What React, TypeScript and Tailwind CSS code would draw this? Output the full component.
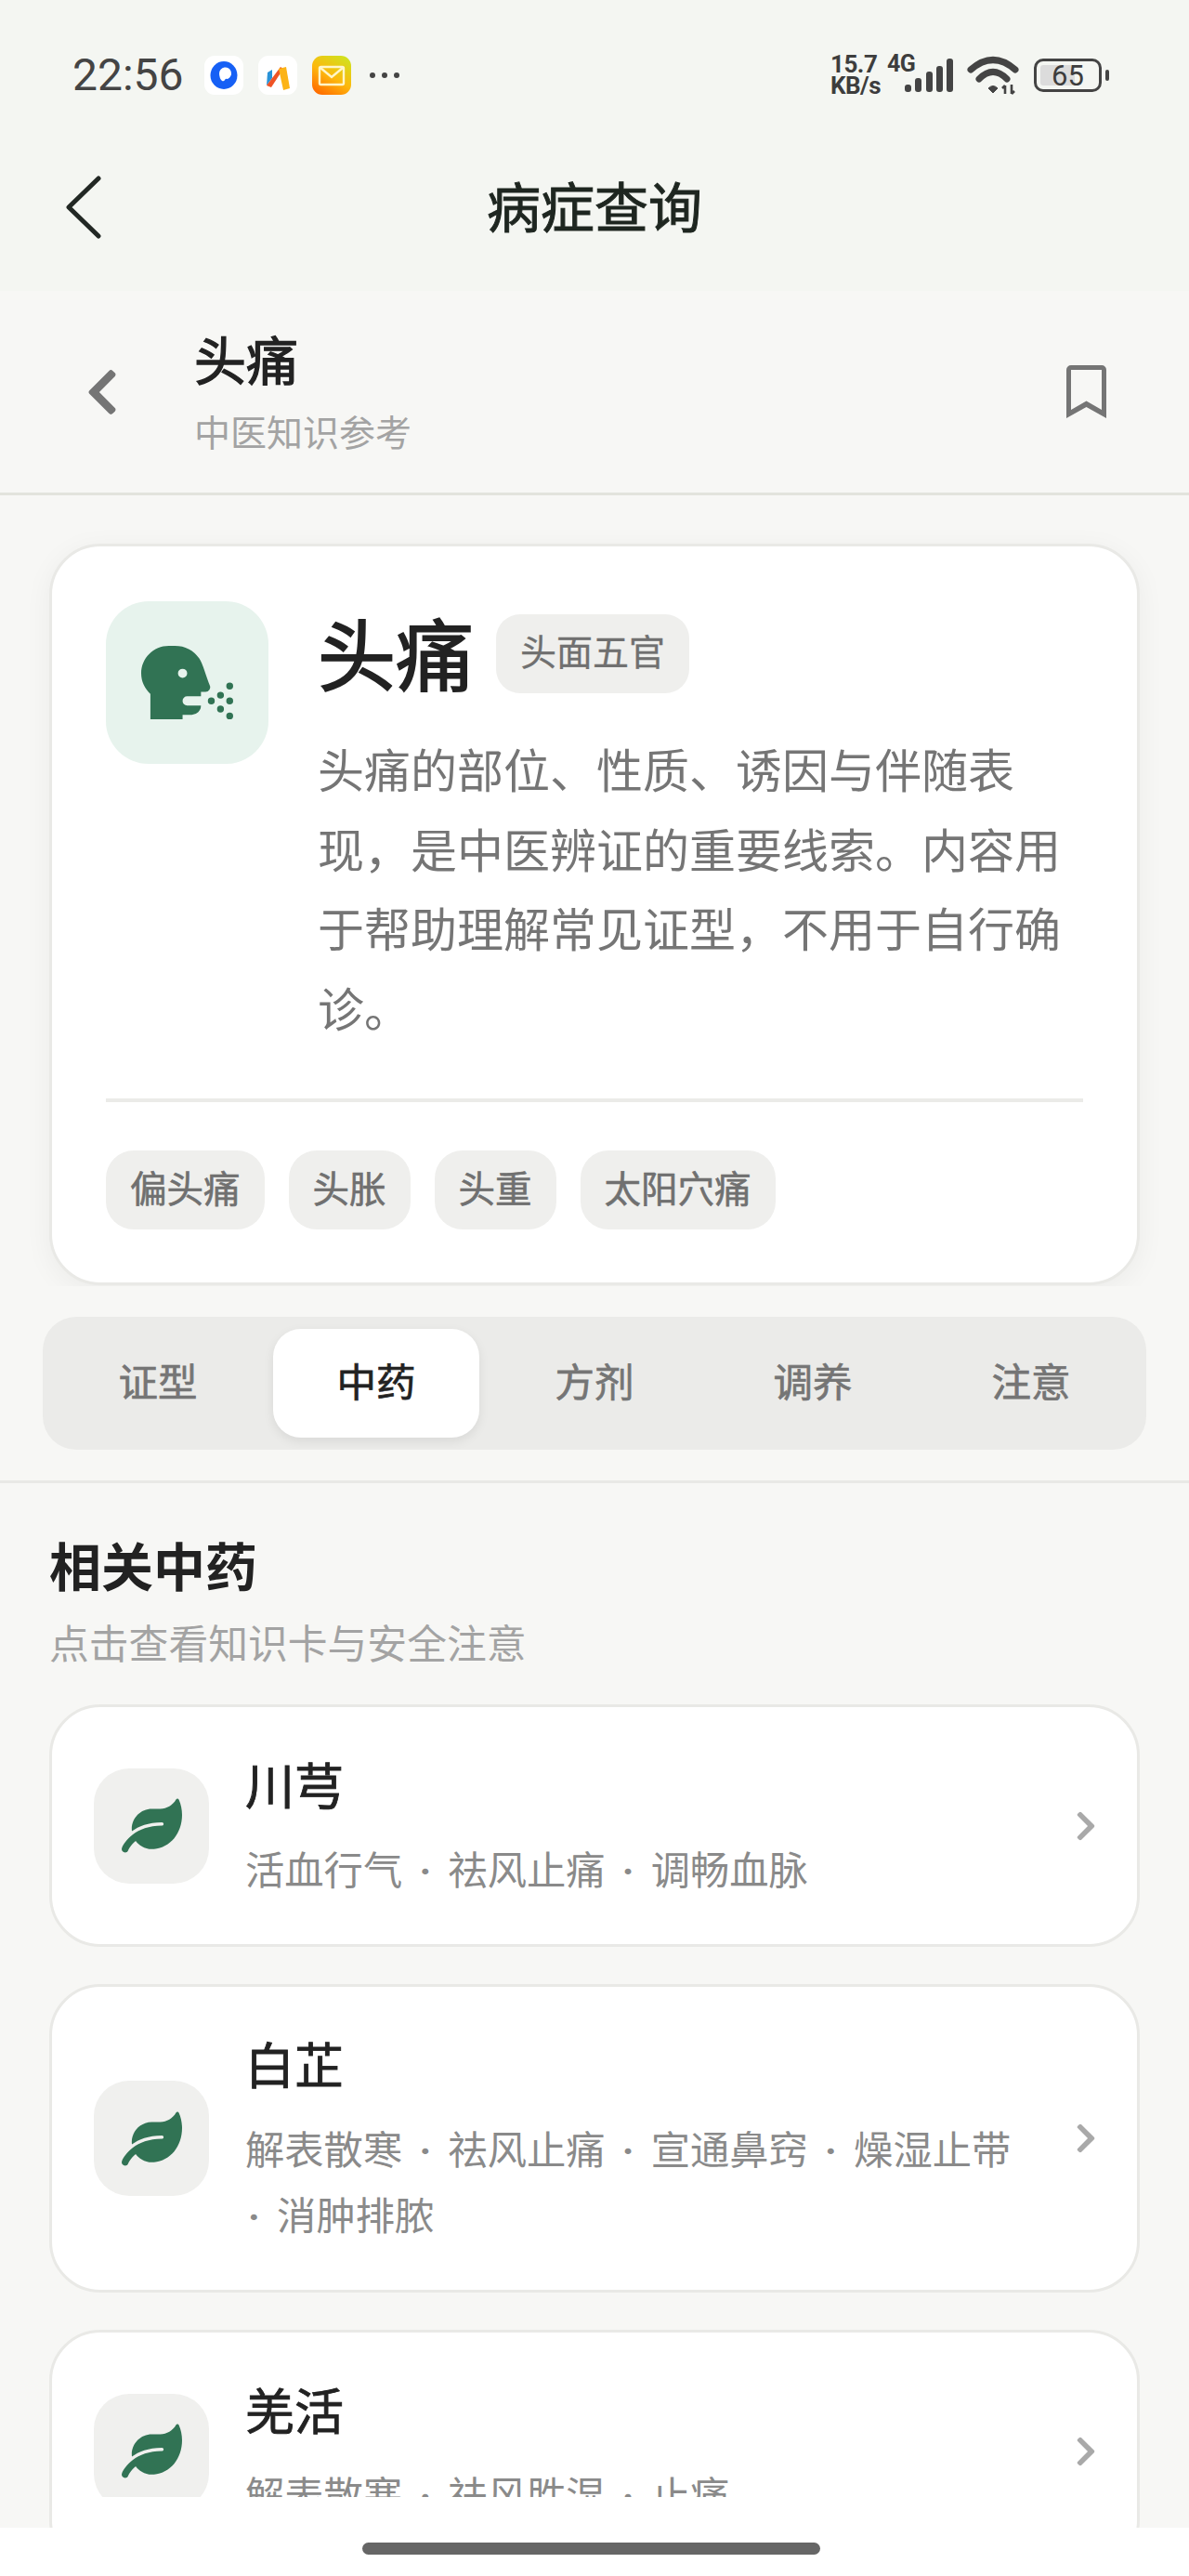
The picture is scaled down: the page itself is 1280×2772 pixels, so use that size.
import React from 'react';
import { FaChevronLeft, FaChevronRight, FaHeadSideCough, FaLeaf } from 'react-icons/fa';

const TAGS = ['偏头痛', '头胀', '头重', '太阳穴痛'];
const TABS = ['证型', '中药', '方剂', '调养', '注意'];

function StatusApps() {
  return (
    <div className="flex items-center gap-[16px] ml-[22px]">
      <svg width="42" height="42" viewBox="0 0 42 42">
        <rect width="42" height="42" rx="11" fill="#fff" />
        <ellipse cx="21" cy="21" rx="14.5" ry="15" fill="#1660f5" />
        <path d="M16 19 a6.5 6.5 0 1 1 9 6 q-2 -1 -3 1 q-1 2 -3 1 q-3 -3 -3 -8z" fill="#fff" />
      </svg>
      <svg width="42" height="42" viewBox="0 0 42 42">
        <rect width="42" height="42" rx="11" fill="#fff" />
        <path d="M9 32 L10 18 L15 15 L15 24 Z" fill="#2a93d8" />
        <path d="M9 32 L24 12 L27 14 L14 34 Z" fill="#ef5325" />
        <path d="M22 14 L30 12 L34 35 L27 37 Z" fill="#fcb316" />
      </svg>
      <svg width="42" height="42" viewBox="0 0 42 42">
        <defs>
          <linearGradient id="mailGrad" x1="0.85" y1="0" x2="0.25" y2="1">
            <stop offset="0" stopColor="#cfe31f" />
            <stop offset="0.55" stopColor="#fdb80d" />
            <stop offset="1" stopColor="#ff6f00" />
          </linearGradient>
        </defs>
        <rect width="42" height="42" rx="11" fill="url(#mailGrad)" />
        <rect x="8" y="12" width="26" height="19" rx="1.5" fill="none" stroke="#fff6c9" strokeWidth="2.4" />
        <path d="M9 13 L21 23 L33 13" fill="none" stroke="#fff6c9" strokeWidth="2.4" />
      </svg>
      <div className="flex gap-[7px] ml-[4px]">
        <span className="w-[6px] h-[6px] rounded-full bg-[#444]" />
        <span className="w-[6px] h-[6px] rounded-full bg-[#444]" />
        <span className="w-[6px] h-[6px] rounded-full bg-[#444]" />
      </div>
    </div>
  );
}

function StatusRight() {
  return (
    <div className="flex items-center mr-[94px] text-[#3d3d3d] font-['Roboto',sans-serif]">
      <div className="flex flex-col w-[61px] text-[26px] font-bold leading-[23px] tracking-[-0.5px]">
        <span>15.7</span>
        <span>KB/s</span>
      </div>
      <div className="relative w-[71px] h-[42px]">
        <span className="absolute left-0 top-[-4px] text-[25px] font-bold leading-[26px] tracking-[-0.5px]">4G</span>
        <svg className="absolute left-[19px] top-[3px]" width="52" height="36" viewBox="0 0 52 36" fill="#444">
          <rect x="0" y="28" width="7" height="8" rx="3" />
          <rect x="11" y="21" width="7" height="15" rx="3" />
          <rect x="23" y="14" width="7" height="22" rx="3" />
          <rect x="34" y="8" width="7" height="28" rx="3" />
          <rect x="45" y="0" width="7" height="36" rx="3" />
        </svg>
      </div>
      <svg className="ml-[15px]" width="56" height="42" viewBox="0 0 56 42" fill="none" stroke="#444">
        <path d="M4 15 Q28 -6 52 15" strokeWidth="7" strokeLinecap="round" />
        <path d="M13 25 Q28 10 43 25" strokeWidth="7" strokeLinecap="round" />
        <path d="M23 35 L28 40 L33 35 Q28 30 23 35Z" fill="#444" strokeWidth="1" />
        <path d="M41 32 v9 M41 32 l-3 3 M48 31 v10 M48 41 l3 -3" strokeWidth="2.6" />
      </svg>
      <div className="relative ml-[16px] w-[73px] h-[36px] rounded-[10px] border-[3.5px] border-[#444]">
        <div className="absolute left-[4px] top-[4px] bottom-[4px] w-[37px] rounded-[3px] bg-[#dcdcdc]" />
        <span className="absolute inset-0 flex items-center justify-center text-[31px] leading-none font-normal">65</span>
        <span className="absolute right-[-10.5px] top-[9px] w-[4px] h-[12px] rounded-full bg-[#444]" />
      </div>
    </div>
  );
}

function Bookmark() {
  return (
    <svg width="43" height="57" viewBox="0 0 43 57">
      <path
        fillRule="evenodd"
        fill="#757575"
        d="M0 5a5 5 0 0 1 5-5H38a5 5 0 0 1 5 5V57L21.5 45 0 57Z M5 5V48L21.5 38.5 38 48V5Z"
      />
    </svg>
  );
}

function HerbRow({ name, effects }: { name: string; effects: string[] }) {
  return (
    <div className="flex items-center pl-[45px] pr-[37px] py-[47px]">
      <div className="w-[124px] h-[124px] shrink-0 rounded-[38px] bg-[#f0f0ee] flex items-center justify-center text-[#317354]">
        <FaLeaf size={65} />
      </div>
      <div className="flex-1 ml-[39px] mr-[50px]">
        <div className="text-[53px] leading-[70px] [-webkit-text-stroke:0.9px_#222] text-[#222]">{name}</div>
        <div className="mt-[20px] text-[42.3px] leading-[71px] text-[#8a8a8a] [word-spacing:5.6px]">
          {effects.map((item, i) => (
            <React.Fragment key={item}>
              {i > 0 && (
                <>
                  {' '}
                  <span className="inline-block w-[19px] text-center font-['Roboto',sans-serif] font-bold leading-none">·</span>{' '}
                </>
              )}
              {item}
            </React.Fragment>
          ))}
        </div>
      </div>
      <FaChevronRight size={36} className="shrink-0 text-[#a9a9a9]" />
    </div>
  );
}

export default function App() {
  return (
    <div className="w-[1280px] h-[2772px] overflow-hidden bg-white font-['Noto_Sans_CJK_SC','Noto_Sans',sans-serif]">
      <div className="h-[2720px] overflow-hidden bg-[#f7f7f5]">
        {/* status bar + page title */}
        <div className="h-[313px] bg-[#f4f6f2] pt-[60px]">
          <div className="flex items-center justify-between h-[42px]">
            <div className="flex items-center pl-[78px]">
              <span className="font-['Roboto',sans-serif] text-[48px] leading-none text-[#444]">22:56</span>
              <StatusApps />
            </div>
            <StatusRight />
          </div>
          <div className="grid grid-cols-[1fr_auto_1fr] items-center h-[120px] mt-[61px]">
            <svg className="ml-[70px]" width="40" height="68" viewBox="0 0 40 68" fill="none">
              <path d="M36 3 L4 34 L36 65" stroke="#222824" strokeWidth="5" strokeLinecap="round" strokeLinejoin="round" />
            </svg>
            <h1 className="text-[58px] leading-[74px] pb-[6px] [-webkit-text-stroke:1px_#1e2620] text-[#1e2620]">病症查询</h1>
            <div />
          </div>
        </div>

        {/* disease header */}
        <div className="h-[220px] flex items-center border-b-[3px] border-[#e2e3dd] pl-[82px] pr-[89px]">
          <FaChevronLeft size={56} className="text-[#757575]" />
          <div className="flex-1 ml-[71px]">
            <div className="text-[56px] leading-[62px] [-webkit-text-stroke:1.3px_#222] text-[#222]">头痛</div>
            <div className="mt-[20px] text-[39px] leading-[54px] text-[#a3a3a3]">中医知识参考</div>
          </div>
          <Bookmark />
        </div>

        {/* overview card */}
        <div className="h-[851px] overflow-hidden pt-[52px] px-[53px]">
          <div className="h-[798px] rounded-[55px] border-[3px] border-[#e9e9e6] bg-white pt-[59px] px-[58px] shadow-[0_6px_30px_rgba(0,0,0,0.05)]">
            <div className="flex">
              <div className="w-[175px] h-[175px] shrink-0 rounded-[46px] bg-[#e7f3ed] flex items-center justify-center text-[#317354]">
                <FaHeadSideCough size={99} />
              </div>
              <div className="ml-[53px] flex-1">
                <div className="flex items-center h-[113px]">
                  <span className="text-[84px] leading-[107px] pb-[6px] [-webkit-text-stroke:1.8px_#222] text-[#222]">头痛</span>
                  <span className="ml-[24px] h-[85px] px-[26px] rounded-[26px] bg-[#efefed] text-[39px] leading-[77px] [-webkit-text-stroke:0.3px_#707070] text-[#707070]">头面五官</span>
                </div>
                <p className="mt-[24px] text-[50px] leading-[85.5px] text-[#757575]">
                  头痛的部位、性质、诱因与伴随表现，是中医辨证的重要线索。内容用于帮助理解常见证型，不用于自行确诊。
                </p>
              </div>
            </div>
            <div className="mt-[56px] h-[3.5px] bg-[#ebebe8]" />
            <div className="mt-[52px] flex gap-[26px]">
              {TAGS.map(tag => (
                <span key={tag} className="h-[85px] px-[26px] rounded-[30px] bg-[#efefed] text-[39.5px] leading-[77px] [-webkit-text-stroke:0.6px_#707070] text-[#707070]">
                  {tag}
                </span>
              ))}
            </div>
          </div>
        </div>

        {/* tabs */}
        <div className="pt-[33px] pb-[33px] px-[46px] border-b-[3px] border-[#e9e9e6]">
          <div className="grid grid-cols-5 gap-[13px] p-[13px] rounded-[36px] bg-[#ebebe9]">
            {TABS.map(tab => (
              <div
                key={tab}
                className={
                  tab === '中药'
                    ? 'h-[117px] rounded-[30px] bg-white shadow-[0_4px_12px_rgba(0,0,0,0.08)] text-[42.5px] leading-[109px] text-center [-webkit-text-stroke:0.7px_#222] text-[#222]'
                    : 'h-[117px] text-[42.5px] leading-[109px] text-center [-webkit-text-stroke:0.7px_#757575] text-[#757575]'
                }
              >
                {tab}
              </div>
            ))}
          </div>
        </div>

        {/* related herbs */}
        <div className="px-[53px] pt-[49px]">
          <h2 className="text-[56px] leading-[76px] font-bold text-[#222]">相关中药</h2>
          <p className="mt-[15px] text-[42.8px] leading-[60px] text-[#a3a3a3]">点击查看知识卡与安全注意</p>
          <div className="mt-[38px] flex flex-col gap-[40px]">
            <div className="rounded-[55px] border-[3px] border-[#e9e9e6] bg-white">
              <HerbRow name="川芎" effects={['活血行气', '祛风止痛', '调畅血脉']} />
            </div>
            <div className="rounded-[55px] border-[3px] border-[#e9e9e6] bg-white">
              <HerbRow name="白芷" effects={['解表散寒', '祛风止痛', '宣通鼻窍', '燥湿止带', '消肿排脓']} />
            </div>
            <div className="h-[260px] rounded-[55px] border-[3px] border-[#e9e9e6] bg-white">
              <div className="h-[177px] overflow-hidden">
                <HerbRow name="羌活" effects={['解表散寒', '祛风胜湿', '止痛']} />
              </div>
            </div>
          </div>
        </div>
      </div>

      {/* gesture bar */}
      <div className="h-[52px] bg-white pt-[16px] pl-[390px]">
        <div className="w-[493px] h-[13px] rounded-full bg-[#666]" />
      </div>
    </div>
  );
}
